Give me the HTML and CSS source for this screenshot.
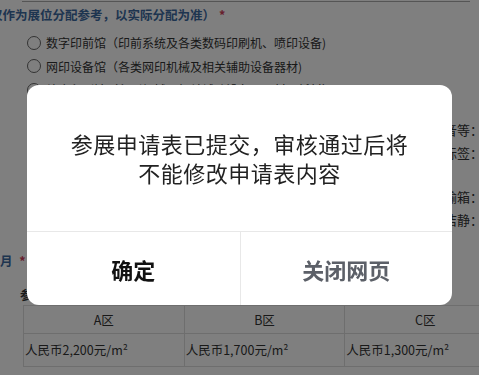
FILE: index.html
```html
<!DOCTYPE html>
<html lang="zh-CN">
<head>
    <meta charset="UTF-8">
    <meta name="viewport" content="width=device-width, initial-scale=1.0">
    <title>参展申请表</title>
    <link rel="stylesheet" href="styles.css">
</head>
<body>

    <div class="page">
        <!-- 上一个输入框的下边线 -->
        <div class="input-edge"></div>

        <!-- 展馆选择 -->
        <div class="label label-top">仅作为展位分配参考，以实际分配为准）<span class="star">*</span></div>
        <div class="radio-list">
            <label class="radio"><span class="circle"></span>数字印前馆（印前系统及各类数码印刷机、喷印设备)</label>
            <label class="radio"><span class="circle"></span>网印设备馆（各类网印机械及相关辅助设备器材)</label>
            <label class="radio"><span class="circle"></span>综合印刷馆（印刷机械及相关辅助设备、器材及耗材）</label>
        </div>

        <!-- 展品说明 -->
        <div class="notes">
            <p class="note-line">展品如有噪音、振动、强光、播放声音等：</p>
            <p class="note-line">请在申请表中注明并按要求张贴标签：</p>
        </div>
        <div class="notes notes-second">
            <p class="note-line">大型展品须提前申报并注明运输箱：</p>
            <p class="note-line">展期内须保持展馆安静与整洁静：</p>
        </div>

        <!-- 展位价格 -->
        <div class="label label-month">月 <span class="star">*</span></div>
        <div class="sub-label">参考价格</div>

        <table class="price-table">
            <tr class="head">
                <td>A区</td>
                <td>B区</td>
                <td>C区</td>
            </tr>
            <tr class="body">
                <td>人民币2,200元/m²</td>
                <td>人民币1,700元/m²</td>
                <td>人民币1,300元/m²</td>
            </tr>
        </table>
    </div>

    <!-- 提交后弹窗 -->
    <div class="mask">
        <div class="dialog">
            <div class="dialog-msg">参展申请表已提交，审核通过后将<br>不能修改申请表内容</div>
            <div class="dialog-btns">
                <button class="btn btn-ok">确定</button>
                <button class="btn btn-close">关闭网页</button>
            </div>
        </div>
    </div>

</body>
</html>
```

FILE: styles.css
```css
body {
    margin: 0;
    padding: 0;
    background-color: #fff;
    font-family: "Noto Sans CJK SC", "Noto Sans", sans-serif;
    color: #333;
    overflow: hidden;
}
.page {
    width: 479px;
    height: 375px;
    overflow: hidden;
}
.input-edge {
    height: 1px;
    margin: 0 9px 0 22px;
    border-bottom: 1px solid #aaa;
}
.label {
    font-size: 12.5px;
    font-weight: bold;
    color: #3d6aa0;
    line-height: 20px;
    white-space: nowrap;
}
.label-top {
    margin: 3px 0 0 -10px;
}
.star {
    color: #d0405a;
    margin-left: 4px;
}
.radio-list {
    margin: 6px 0 0 27px;
}
.radio {
    display: flex;
    align-items: center;
    height: 23.5px;
    font-size: 12px;
    white-space: nowrap;
}
.circle {
    width: 12px;
    height: 12px;
    border: 1.5px solid #666;
    border-radius: 50%;
    margin-right: 5px;
    flex-shrink: 0;
}
.notes {
    margin: 16px -4px 0 0;
    text-align: right;
}
.notes-second {
    margin-top: 21px;
}
.note-line {
    margin: 0;
    font-size: 13px;
    line-height: 23px;
    white-space: nowrap;
}
.label-month {
    margin: 20px 0 0 0;
    font-size: 12.5px;
}
.sub-label {
    margin: 16px 0 0 20px;
    font-size: 12.5px;
    line-height: 16px;
    font-weight: bold;
    color: #333;
}
.price-table {
    margin: 2px 0 0 23px;
    width: 483px;
    border-collapse: collapse;
    table-layout: fixed;
    font-size: 12.5px;
}
.price-table td {
    border: 1px solid #ddd;
    padding: 0 1px;
    white-space: nowrap;
}
.price-table .head td {
    height: 27px;
    text-align: center;
}
.price-table .body td {
    height: 32px;
}

/* 遮罩与弹窗 */
.mask {
    position: fixed;
    top: 0;
    left: 0;
    right: 0;
    bottom: 0;
    background-color: rgba(0, 0, 0, 0.5);
    display: flex;
    justify-content: center;
    align-items: center;
    padding-top: 15px;
}
.dialog {
    width: 425px;
    background-color: #fff;
    border-radius: 12px;
    overflow: hidden;
}
.dialog-msg {
    height: 146px;
    display: flex;
    align-items: center;
    justify-content: center;
    text-align: center;
    font-size: 22px;
    line-height: 29px;
    letter-spacing: 0.5px;
    color: #222;
}
.dialog-btns {
    display: grid;
    grid-template-columns: 1fr 1fr;
    border-top: 1px solid #e8e8e8;
}
.btn {
    height: 73px;
    border: none;
    background: none;
    font-family: "Noto Sans CJK SC", sans-serif;
    font-size: 22px;
    font-weight: bold;
    padding: 0;
    cursor: pointer;
}
.btn-ok {
    color: #111;
}
.btn-close {
    color: #5c6068;
    border-left: 1px solid #e8e8e8;
}
```
